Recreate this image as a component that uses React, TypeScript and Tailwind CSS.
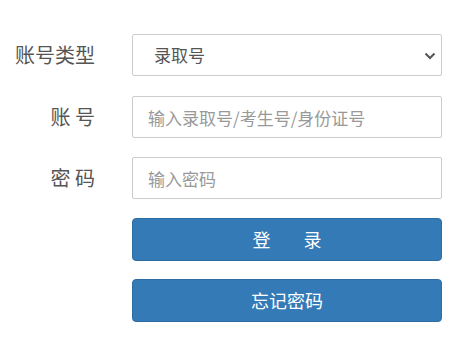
import { useState } from "react";

const font = "font-['Microsoft_YaHei','Noto_Sans_CJK_SC',sans-serif]";

function Label({ children }: { children: React.ReactNode }) {
    return (
        <label className="w-[95px] shrink-0 text-right text-[20px] leading-none text-[#555] whitespace-pre">
            {children}
        </label>
    );
}

export default function App() {
    const [type, setType] = useState("录取号");
    const [account, setAccount] = useState("");
    const [password, setPassword] = useState("");

    return (
        <div className={`${font} min-h-[347px] w-[457px] bg-white pt-[34px]`}>
            <form className="flex flex-col" onSubmit={(e) => e.preventDefault()}>
                <div className="flex items-center">
                    <Label>账号类型</Label>
                    <div className="relative ml-[37px] w-[310px]">
                        <select
                            value={type}
                            onChange={(e) => setType(e.target.value)}
                            className="h-[42px] w-full appearance-none rounded-[2px] border border-[#ccc] bg-white pl-[21px] text-[17px] text-[#555] outline-none"
                        >
                            <option value="录取号">录取号</option>
                            <option value="考生号">考生号</option>
                            <option value="身份证号">身份证号</option>
                        </select>
                        <svg
                            className="pointer-events-none absolute right-[6px] top-[18px]"
                            width="12"
                            height="8"
                            viewBox="0 0 12 8"
                        >
                            <path d="M1.5 1.5 L6 6 L10.5 1.5" fill="none" stroke="#555" strokeWidth="2" />
                        </svg>
                    </div>
                </div>

                <div className="mt-[20px] flex items-center">
                    <Label>账 号</Label>
                    <input
                        type="text"
                        value={account}
                        onChange={(e) => setAccount(e.target.value)}
                        placeholder="输入录取号/考生号/身份证号"
                        className="ml-[37px] h-[42px] w-[310px] rounded-[2px] border border-[#ccc] px-[15px] text-[17px] text-[#555] outline-none placeholder:text-[#999]"
                    />
                </div>

                <div className="mt-[19px] flex items-center">
                    <Label>密 码</Label>
                    <input
                        type="password"
                        value={password}
                        onChange={(e) => setPassword(e.target.value)}
                        placeholder="输入密码"
                        className="ml-[37px] h-[42px] w-[310px] rounded-[2px] border border-[#ccc] px-[15px] text-[17px] text-[#555] outline-none placeholder:text-[#999]"
                    />
                </div>

                <div className="mt-[19px] flex">
                    <button
                        type="submit"
                        className="ml-[132px] flex h-[43px] w-[310px] items-center justify-center gap-[33px] rounded-[4px] border border-[#2e6da4] bg-[#337ab7] text-[18px] text-white"
                    >
                        <span>登</span>
                        <span>录</span>
                    </button>
                </div>

                <div className="mt-[18px] flex">
                    <button
                        type="button"
                        className="ml-[132px] h-[43px] w-[310px] rounded-[4px] border border-[#2e6da4] bg-[#337ab7] text-[18px] text-white"
                    >
                        忘记密码
                    </button>
                </div>
            </form>
        </div>
    );
}
